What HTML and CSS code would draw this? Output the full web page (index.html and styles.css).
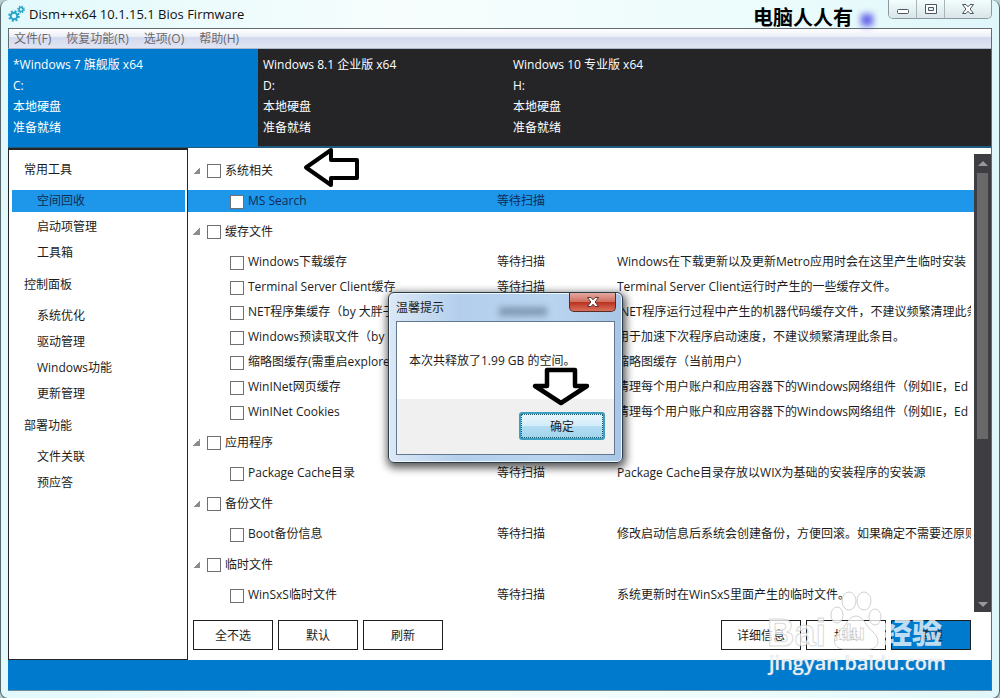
FILE: index.html
```html
<!DOCTYPE html>
<html lang="zh-CN">
<head>
<meta charset="utf-8">
<title>Dism++x64 10.1.15.1 Bios Firmware</title>
<link rel="stylesheet" href="styles.css">
</head>
<body>
<div class="window">
  <header class="titlebar">
    <svg class="app-icon" viewBox="0 0 18 18" aria-hidden="true">
      <g fill="none" stroke="#27a3c8">
        <circle cx="6" cy="11" r="3.3" stroke-width="2"/>
        <circle cx="6" cy="11" r="4.9" stroke-width="1.8" stroke-dasharray="2 1.85"/>
        <circle cx="13" cy="4.500" r="2" stroke-width="1.500"/>
        <circle cx="13" cy="4.500" r="3.200" stroke-width="1.400" stroke-dasharray="1.300 1.210"/>
      </g>
    </svg>
    <h1 class="title">Dism++x64 10.1.15.1 Bios Firmware</h1>
    <span class="stamp">电脑人人有</span>
    <span class="stamp-dot"></span>
    <div class="caption-buttons">
      <button class="cap" aria-label="最小化"><svg viewBox="0 0 14 14"><rect x="1.500" y="7.500" width="11" height="4" rx="1" fill="#fff" stroke="#4c5661"/></svg></button>
      <button class="cap" aria-label="最大化"><svg viewBox="0 0 14 14"><path d="M1.500 2.500h11v9h-11zM4.500 5.500v3h5v-3z" fill="#fff" fill-rule="evenodd" stroke="#4c5661"/></svg></button>
      <button class="cap cap-close" aria-label="关闭"><svg viewBox="0 0 14 14"><path d="M1.500 2.500h3.500l2 2.300 2-2.300h3.500l-3.400 4.500 3.400 4.500h-3.500l-2-2.300-2 2.300h-3.500l3.400-4.500z" fill="#fff" stroke="#4c5661"/></svg></button>
    </div>
  </header>
  <div class="client">
    <nav class="menubar">
      <button>文件(F)</button><button>恢复功能(R)</button><button>选项(O)</button><button>帮助(H)</button>
    </nav>
    <div class="systems">
      <div class="system current"><p>*Windows 7 旗舰版 x64</p><p>C:</p><p>本地硬盘</p><p>准备就绪</p></div>
      <div class="system"><p>Windows 8.1 企业版 x64</p><p>D:</p><p>本地硬盘</p><p>准备就绪</p></div>
      <div class="system"><p>Windows 10 专业版 x64</p><p>H:</p><p>本地硬盘</p><p>准备就绪</p></div>
    </div>
    <div class="body">
      <nav class="sidebar">
        <h2>常用工具</h2>
        <ul><li><a class="active" href="#clean">空间回收</a></li><li><a href="#startup">启动项管理</a></li><li><a href="#tools">工具箱</a></li></ul>
        <h2>控制面板</h2>
        <ul><li><a href="#optimize">系统优化</a></li><li><a href="#drivers">驱动管理</a></li><li><a href="#features">Windows功能</a></li><li><a href="#updates">更新管理</a></li></ul>
        <h2>部署功能</h2>
        <ul><li><a href="#assoc">文件关联</a></li><li><a href="#answer">预应答</a></li></ul>
      </nav>
      <main class="main">
        <div class="list-area">
          <div class="list">
            <div class="group"><span class="twisty"></span><label><input type="checkbox">系统相关</label>
              <svg class="arrow-left" viewBox="0 0 58 42" aria-hidden="true"><path d="M4 20.500 29 3V13H55V31H29V38Z" fill="#fff" stroke="#000" stroke-width="4" stroke-linejoin="round"/></svg></div>
            <div class="item selected"><label><input type="checkbox">MS Search</label><span>等待扫描</span><span class="desc"></span></div>
            <div class="group"><span class="twisty"></span><label><input type="checkbox">缓存文件</label></div>
            <div class="item"><label><input type="checkbox">Windows下载缓存</label><span>等待扫描</span><span class="desc">Windows在下载更新以及更新Metro应用时会在这里产生临时安装</span></div>
            <div class="item"><label><input type="checkbox">Terminal Server Client缓存</label><span>等待扫描</span><span class="desc">Terminal Server Client运行时产生的一些缓存文件。</span></div>
            <div class="item"><label><input type="checkbox">NET程序集缓存（by 大胖子</label><span>等待扫描</span><span class="desc">.NET程序运行过程中产生的机器代码缓存文件，不建议频繁清理此条</span></div>
            <div class="item"><label><input type="checkbox">Windows预读取文件（by</label><span>等待扫描</span><span class="desc">用于加速下次程序启动速度，不建议频繁清理此条目。</span></div>
            <div class="item"><label><input type="checkbox">缩略图缓存(需重启explorer</label><span>等待扫描</span><span class="desc">缩略图缓存（当前用户）</span></div>
            <div class="item"><label><input type="checkbox">WinINet网页缓存</label><span>等待扫描</span><span class="desc">清理每个用户账户和应用容器下的Windows网络组件（例如IE，Ed</span></div>
            <div class="item"><label><input type="checkbox">WinINet Cookies</label><span>等待扫描</span><span class="desc">清理每个用户账户和应用容器下的Windows网络组件（例如IE，Ed</span></div>
            <div class="group"><span class="twisty"></span><label><input type="checkbox">应用程序</label></div>
            <div class="item"><label><input type="checkbox">Package Cache目录</label><span>等待扫描</span><span class="desc">Package Cache目录存放以WIX为基础的安装程序的安装源</span></div>
            <div class="group"><span class="twisty"></span><label><input type="checkbox">备份文件</label></div>
            <div class="item"><label><input type="checkbox">Boot备份信息</label><span>等待扫描</span><span class="desc">修改启动信息后系统会创建备份，方便回滚。如果确定不需要还原则</span></div>
            <div class="group"><span class="twisty"></span><label><input type="checkbox">临时文件</label></div>
            <div class="item"><label><input type="checkbox">WinSxS临时文件</label><span>等待扫描</span><span class="desc">系统更新时在WinSxS里面产生的临时文件。</span></div>
          </div>
          <div class="scrollbar" aria-hidden="true"><i class="up"></i><i class="thumb"></i><i class="down"></i></div>
        </div>
        <div class="actions">
          <button>全不选</button><button>默认</button><button>刷新</button>
          <button class="push">详细信息</button><button>扫描</button><button class="primary">清理</button>
        </div>
      </main>
    </div>
    <footer class="status"></footer>
  </div>

  <div class="dialog" role="dialog" aria-labelledby="dlg-title">
    <div class="dialog-title"><h2 id="dlg-title">温馨提示</h2><span class="ghost" aria-hidden="true"></span>
      <button class="dialog-close" aria-label="关闭"><svg viewBox="0 0 14 14"><path d="M1.500 2.500h3.500l2 2.300 2-2.300h3.500l-3.400 4.500 3.400 4.500h-3.500l-2-2.300-2 2.300h-3.500l3.400-4.500z" fill="#fff" stroke="#5c3533"/></svg></button></div>
    <div class="dialog-body">
      <p>本次共释放了1.99 GB 的空间。</p>
      <div class="dialog-foot"><button class="ok">确定</button></div>
      <svg class="arrow-down" viewBox="0 0 62 40" aria-hidden="true"><path d="M17 3H45V19H57L31 36 5 19H17Z" fill="#fff" stroke="#000" stroke-width="4.500" stroke-linejoin="round"/></svg>
    </div>
  </div>

  <div class="watermark">
    <svg class="paw" viewBox="0 0 56 66" aria-hidden="true"><g fill="#fff" fill-opacity=".75" stroke="#c4c4c4" stroke-opacity=".8"><ellipse cx="9" cy="24" rx="6" ry="8"/><ellipse cx="21" cy="10" rx="7" ry="9"/><ellipse cx="36" cy="10" rx="7" ry="9"/><ellipse cx="47" cy="26" rx="6" ry="8"/><path d="M28 25C20 25 18 36 11 41C3 48 6 58 16 58H41C51 58 53 48 45 41C38 36 36 25 28 25Z"/></g></svg>
    <div class="wm-brand"><b>Bai</b><b class="du">du</b><b class="wm-cn">经验</b></div>
    <div class="wm-url">jingyan.baidu.com</div>
  </div>
</div>
</body>
</html>
```
FILE: styles.css
```css
* { box-sizing: border-box; margin: 0; padding: 0; }
html { background: #b9cdd2; }
body { font: 12px/21px "Open Sans", "Noto Sans CJK SC", sans-serif; color: #1c1c1c; }
button { font: inherit; color: inherit; background: none; border: 0; }
ul { list-style: none; }
a { color: inherit; text-decoration: none; }
h1, h2 { font: inherit; }

.window { position: relative; min-height: 100vh; display: flex; flex-direction: column; padding: 0 7px 7px; border: 1px solid #56666b; border-top: 0; border-radius: 8px; background: linear-gradient(90deg, #e2f9fb, #f7fdfd 40%, #edfcfc 75%, #dff6fa); overflow: hidden; }
.titlebar { display: flex; height: 28px; align-items: center; }
.app-icon { width: 18px; height: 18px; }
.title { margin-left: 3px; font-size: 13px; line-height: 20px; color: #111; }
.stamp { margin-left: auto; font: 700 20px/24px "Noto Sans CJK SC", sans-serif; color: #000; padding-top: 5px; }
.stamp-dot { width: 12px; height: 12px; margin: 12px 15px 0 8px; background: #6464e8; filter: blur(3px); }
.caption-buttons { display: flex; align-self: flex-start; height: 19px; border: 1px solid #8b999e; border-top: 0; border-radius: 0 0 5px 5px; overflow: hidden; }
.cap { width: 28px; display: grid; place-items: center; border-right: 1px solid #a9b5b9; background: linear-gradient(#f3fdfd, #d9e5e9); }
.cap svg, .dialog-close svg { width: 14px; height: 14px; }
.cap-close { width: 46px; border-right: 0; }

.client { flex: 1; display: flex; flex-direction: column; border-right: 1px solid #626c70; border-bottom: 1px solid #6f8c9a; background: #fff; }
.menubar { height: 21px; display: flex; gap: 15px; padding-left: 5px; border: 1px solid #626c70; border-right: 0; border-bottom-color: #aeb6cc; background: linear-gradient(#fff, #eceef8 40%, #d4daee 45%, #e0e4f3); color: #6a6a6e; line-height: 20px; }
.systems { display: grid; grid-template-columns: 250px 250px 1fr; height: 99px; background: #252528; color: #fff; border-bottom: 2px solid #1e5c80; }
.system { padding: 5px; margin-bottom: -1px; }
.current { background: #007acc; }
.body { flex: 1; display: flex; }
.sidebar { width: 180px; border: 1px solid #252528; border-top-width: 2px; padding: 9px 2px 0 3px; }
.sidebar h2 { padding-left: 12px; line-height: 21px; margin-bottom: 10px; }
.sidebar ul { display: grid; gap: 4px; margin-bottom: 10px; }
.sidebar a { display: block; padding-left: 25px; line-height: 22px; }
.sidebar .active, .selected { background: #1e96e9; color: #102c55; }

.main { flex: 1; min-width: 0; display: flex; flex-direction: column; }
.list-area { display: flex; padding-top: 4px; }
.list { flex: 1; min-width: 0; padding-bottom: 5px; }
.group { position: relative; display: flex; align-items: center; height: 36px; padding-left: 5px; gap: 7px; }
.twisty { width: 7px; height: 7px; background: linear-gradient(135deg, transparent 50%, #8c8c8c 50%); }
label { display: flex; align-items: center; gap: 4px; white-space: nowrap; }
input { appearance: none; flex: none; width: 14px; height: 14px; border: 1px solid #707070; background: #fff; margin-top: 2px; }
.item { display: grid; grid-template-columns: 267px 120px 1fr; align-items: center; height: 25px; padding-left: 42px; padding-right: 3px; line-height: 22px; }
.desc { overflow: hidden; white-space: nowrap; }
.selected { height: 22px; margin: 2px 0 1px; }
.arrow-left { position: absolute; left: 114px; top: -5px; width: 58px; height: 42px; }
.scrollbar { width: 17px; margin-top: 2px; display: flex; flex-direction: column; align-items: center; background: #3e3e42; }
.up, .down { border: 5px solid transparent; }
.up { border-top: 0; border-bottom-color: #999; margin: 7px 0; }
.down { border-bottom: 0; border-top-color: #999; margin: auto 0 5px; }
.thumb { width: 11px; height: 266px; background: #686868; }
.actions { display: flex; gap: 5px; padding: 8px 20px 10px 5px; }
.actions button { width: 80px; height: 30px; border: 1px solid #1e1e1e; background: #fff; }
.actions .push { margin-left: auto; }
.actions .primary { background: #007acc; color: #12304a; }
.status { height: 30px; background: #007acc; }

.dialog { position: absolute; left: 387px; top: 292px; width: 235px; padding: 0 7px 7px; border: 1px solid #2d3a48; border-radius: 6px; background: linear-gradient(90deg, #dbe8f6, #b4cfec 30%, #b9d4ef 70%, #a9c6e6); box-shadow: inset 0 0 0 1px #f0f8ff, 1px 3px 9px 2px rgba(0, 0, 0, .65); }
.dialog-title { display: flex; align-items: center; height: 28px; }
.ghost { width: 48px; height: 9px; margin: 8px 0 0 55px; background: #8199b3; filter: blur(3px); }
.dialog-close { display: grid; place-items: center; align-self: flex-start; width: 47px; height: 19px; margin-left: auto; margin-right: -1px; border: 1px solid #5b2926; border-top: 0; border-radius: 0 0 5px 5px; background: linear-gradient(#e4a99f, #cf6f60 48%, #b9301e 50%, #d9705a); }
.dialog-body { position: relative; border: 1px solid #62788f; background: #fff; }
.dialog-body p { padding: 28px 12px; }
.dialog-foot { display: flex; justify-content: flex-end; height: 55px; padding: 13px 9px; background: #f0f0f0; }
.ok { width: 86px; height: 28px; border: 2px solid #3c9fc0; border-radius: 3px; outline: 1px dotted #24566a; outline-offset: -3px; background: linear-gradient(#e7f5fc, #d3ecf9 48%, #b4def3 50%, #9fd3ed); }
.arrow-down { position: absolute; left: 133px; top: 45px; width: 62px; height: 40px; }

.watermark { position: absolute; left: 766px; top: 591px; width: 185px; height: 88px; pointer-events: none; color: rgba(255, 255, 255, .75); }
.paw { position: absolute; left: 61px; top: 0; width: 56px; height: 66px; }
.wm-brand { position: absolute; left: 0; top: 22px; display: flex; font: 700 38px/40px "Liberation Sans", "Noto Sans CJK SC", sans-serif; -webkit-text-stroke: 1px rgba(185, 185, 185, .55); }
.du { font-size: 22px; margin-left: 12px; }
.wm-cn { font-size: 30px; margin-left: 17px; -webkit-text-stroke: 0; }
.wm-url { position: absolute; left: 2px; top: 60px; font: 600 20px/24px "Open Sans", sans-serif; text-shadow: 0 0 1px #b8c4d0; }
```
